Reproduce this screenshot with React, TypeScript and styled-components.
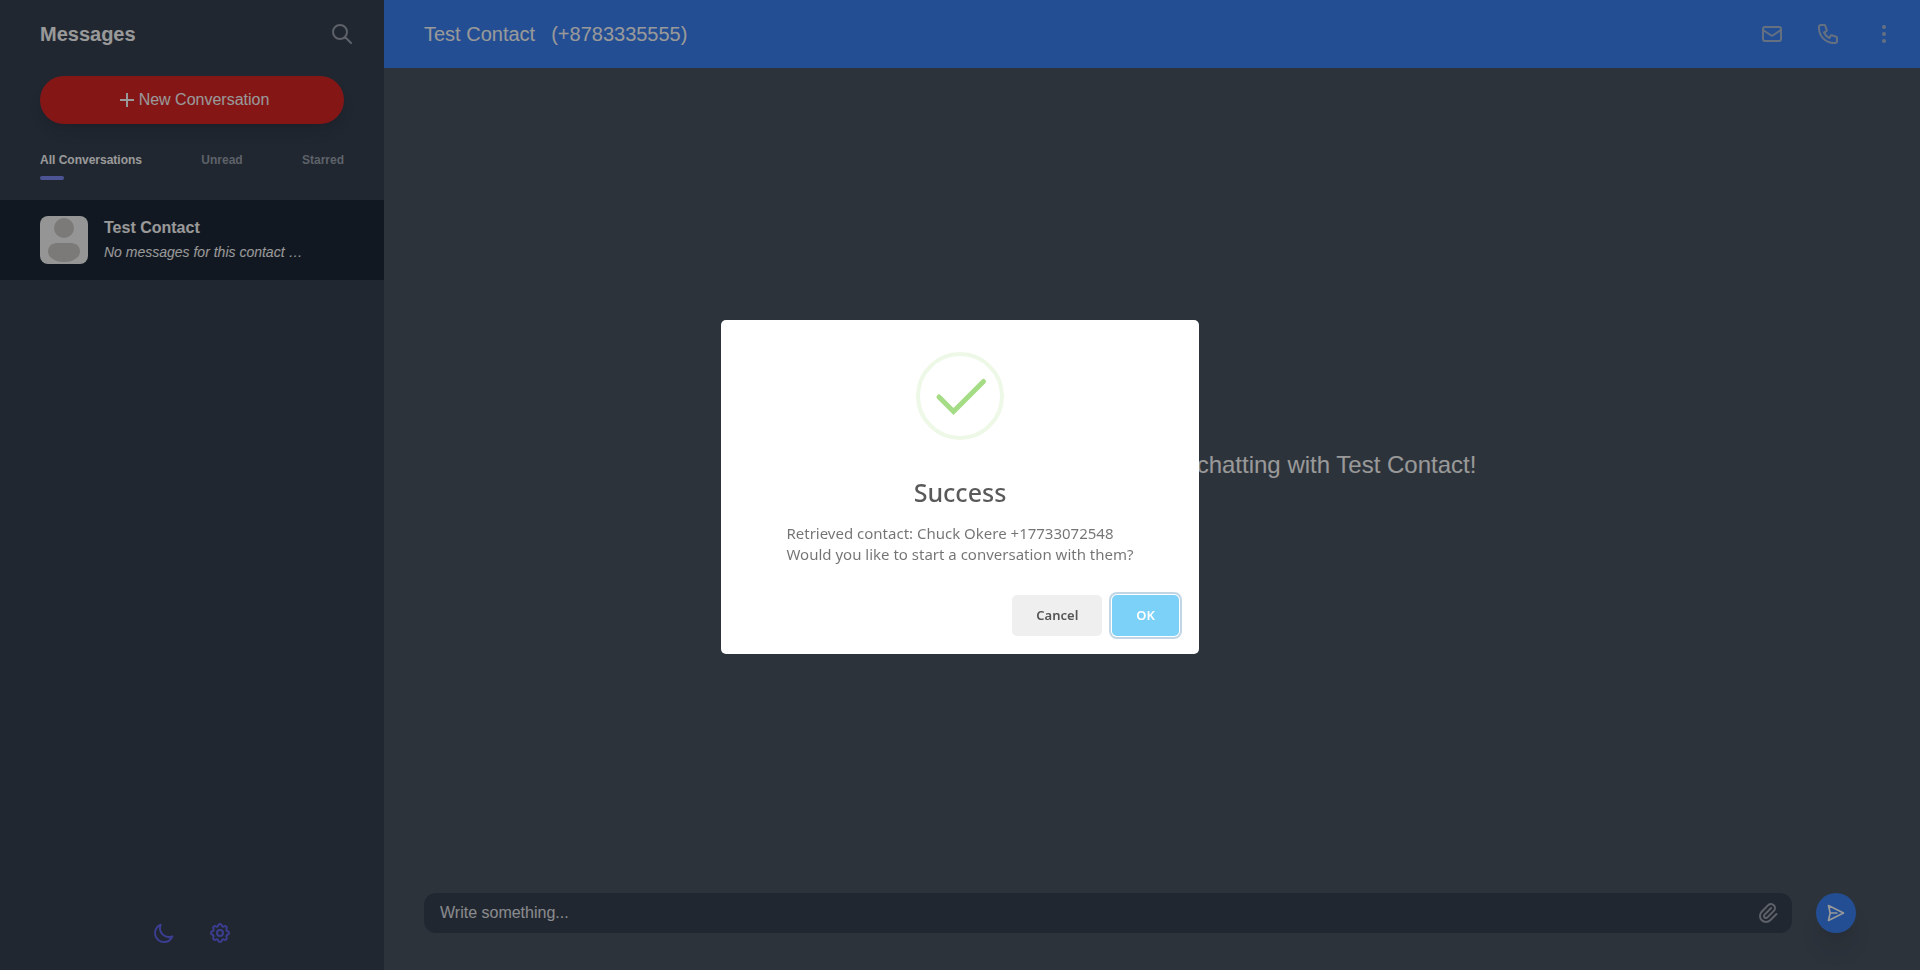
import React from "react";
import styled, { createGlobalStyle } from "styled-components";
import {
  HiOutlineSearch,
  HiOutlineMail,
  HiOutlinePhone,
  HiOutlineDotsVertical,
  HiOutlineMoon,
  HiOutlineCog,
  HiOutlinePaperClip,
} from "react-icons/hi";

const GlobalStyle = createGlobalStyle`
  *, *::before, *::after { box-sizing: border-box; }
  body {
    margin: 0;
    font-family: "Liberation Sans", Arial, sans-serif;
    font-size: 16px;
    line-height: 24px;
    color: #fff;
  }
  h1, h2, p, ul { margin: 0; padding: 0; font-weight: inherit; font-size: inherit; }
  ul { list-style: none; }
  button, input { font: inherit; color: inherit; border: 0; padding: 0; background: none; }
  button { cursor: pointer; }
  svg { display: block; }
`;

const Page = styled.div`
  display: flex;
  height: 100vh;
  overflow: hidden;
`;

const Sidebar = styled.aside`
  display: flex;
  flex-direction: column;
  width: 20%;
  flex-shrink: 0;
  background: #374151;
`;

const SidebarTop = styled.div`
  display: flex;
  flex-direction: column;
  padding: 0 40px 20px;
`;

const SidebarHeader = styled.div`
  display: flex;
  align-items: center;
  justify-content: space-between;
  height: 68px;
  margin-right: -10px;
`;

const SidebarTitle = styled.h1`
  font-size: 20px;
  font-weight: 700;
`;

const IconButton = styled.button<{ $color?: string }>`
  width: 24px;
  height: 24px;
  color: ${(p) => p.$color ?? "#9ca3af"};
`;

const NewButton = styled.button`
  display: flex;
  align-items: center;
  justify-content: center;
  gap: 4px;
  height: 48px;
  margin-top: 8px;
  padding-left: 4px;
  border-radius: 24px;
  background: #dc2626;
  box-shadow: 0 10px 15px -3px rgba(0, 0, 0, 0.1), 0 4px 6px -2px rgba(0, 0, 0, 0.05);
`;

const Tabs = styled.nav`
  display: flex;
  justify-content: space-between;
  margin-top: 24px;
`;

const Tab = styled.button<{ $active?: boolean }>`
  display: flex;
  flex-direction: column;
  gap: 4px;
  font-size: 12px;
  font-weight: 700;
  color: ${(p) => (p.$active ? "#fff" : "#9ca3af")};

  &::after {
    content: "";
    width: 24px;
    height: 4px;
    border-radius: 2px;
    background: ${(p) => (p.$active ? "#818cf8" : "transparent")};
  }
`;

const Conversations = styled.ul`
  flex: 1;
`;

const Conversation = styled.li`
  display: flex;
  align-items: center;
  gap: 16px;
  height: 80px;
  padding: 0 40px;
  background: #1f2937;
`;

const AvatarFrame = styled.svg`
  width: 48px;
  height: 48px;
  border-radius: 8px;
  background: #f8f8f8;
`;

const ContactName = styled.p`
  font-weight: 700;
`;

const ContactPreview = styled.p`
  font-size: 14px;
  font-style: italic;
`;

const SidebarFooter = styled.div`
  display: flex;
  justify-content: center;
  gap: 32px;
  padding-bottom: 25px;
`;

const Main = styled.main`
  display: flex;
  flex-direction: column;
  flex: 1;
  min-width: 0;
  background: #4b5563;
`;

const ChatHeader = styled.header`
  display: flex;
  align-items: center;
  justify-content: space-between;
  height: 68px;
  padding: 0 24px 0 40px;
  background: #3b82f6;
`;

const ChatTitle = styled.h2`
  display: flex;
  gap: 16px;
  font-size: 20px;
`;

const ChatActions = styled.div`
  display: flex;
  gap: 32px;
`;

const ChatBody = styled.section`
  display: flex;
  align-items: center;
  justify-content: center;
  flex: 1;
  font-size: 24px;
`;

const Composer = styled.form`
  display: flex;
  align-items: center;
  gap: 24px;
  padding: 32px 64px 37px 40px;
`;

const Field = styled.label`
  display: flex;
  align-items: center;
  flex: 1;
  height: 40px;
  padding: 0 12px 0 16px;
  border-radius: 12px;
  background: #374151;
`;

const FieldInput = styled.input`
  flex: 1;
  min-width: 0;
  outline: 0;

  &::placeholder {
    color: #e5e7eb;
    opacity: 1;
  }
`;

const SendButton = styled.button`
  display: flex;
  align-items: center;
  justify-content: center;
  width: 40px;
  height: 40px;
  border-radius: 50%;
  background: #3b82f6;
  box-shadow: 0 20px 25px -5px rgba(0, 0, 0, 0.1), 0 10px 10px -5px rgba(0, 0, 0, 0.04);
`;

const Overlay = styled.div`
  position: fixed;
  inset: 0;
  display: flex;
  align-items: center;
  justify-content: center;
  padding-top: 3px;
  background: rgba(0, 0, 0, 0.4);
`;

const Modal = styled.div`
  display: flex;
  flex-direction: column;
  align-items: center;
  width: 478px;
  padding-top: 32px;
  border-radius: 5px;
  background: #fff;
  font-family: "Noto Sans", "Open Sans", sans-serif;
`;

const ModalTitle = styled.h2`
  margin-top: 34px;
  font-size: 25px;
  font-weight: 500;
  line-height: 36px;
  color: rgba(0, 0, 0, 0.65);
`;

const ModalText = styled.p`
  margin-top: 13px;
  font-size: 15px;
  line-height: 21px;
  color: rgba(0, 0, 0, 0.55);
`;

const ModalFooter = styled.div`
  display: flex;
  justify-content: flex-end;
  align-self: stretch;
  gap: 10px;
  padding: 30px 20px 18px;
`;

const ModalButton = styled.button<{ $primary?: boolean }>`
  height: 41px;
  padding: 0 24px;
  border-radius: 5px;
  font-size: 13px;
  font-weight: 600;
  color: ${(p) => (p.$primary ? "#fff" : "#555")};
  background: ${(p) => (p.$primary ? "#7cd1f9" : "#efefef")};
  box-shadow: ${(p) => (p.$primary ? "0 0 0 1px #fff, 0 0 0 3px rgba(43, 114, 165, 0.29)" : "none")};
`;

const Avatar = () => (
  <AvatarFrame viewBox="0 0 48 48" aria-hidden="true">
    <circle cx="24" cy="12" r="10" fill="#cecbc8" />
    <path
      d="M17 27h14c5.500 0 9 4 9 8.500C40 41.500 33 46 24 46S8 41.500 8 35.500C8 31 11.500 27 17 27z"
      fill="#cecbc8"
    />
  </AvatarFrame>
);

const PlusIcon = () => (
  <svg width="16" height="16" viewBox="0 0 16 16" fill="none" stroke="currentColor" strokeWidth="2" aria-hidden="true">
    <path d="M8 1v14M1 8h14" />
  </svg>
);

const SendIcon = () => (
  <svg
    width="20"
    height="20"
    viewBox="0 0 24 24"
    fill="none"
    stroke="currentColor"
    strokeWidth="2"
    strokeLinecap="round"
    strokeLinejoin="round"
    aria-hidden="true"
  >
    <path d="M5 12L3 21l18-9L3 3l2 9zm0 0h8" />
  </svg>
);

const SuccessIcon = () => (
  <svg width="88" height="88" viewBox="0 0 88 88" fill="none" aria-hidden="true">
    <circle cx="44" cy="44" r="42" stroke="#edf8e7" strokeWidth="4" />
    <path d="M23 45L37.500 59.500L67.500 29.500" stroke="#a5dc86" strokeWidth="5" strokeLinecap="round" />
  </svg>
);

export default function App() {
  return (
    <>
      <GlobalStyle />
      <Page>
        <Sidebar>
          <SidebarTop>
            <SidebarHeader>
              <SidebarTitle>Messages</SidebarTitle>
              <IconButton aria-label="Search">
                <HiOutlineSearch size={24} />
              </IconButton>
            </SidebarHeader>
            <NewButton>
              <PlusIcon />
              New Conversation
            </NewButton>
            <Tabs>
              <Tab $active>All Conversations</Tab>
              <Tab>Unread</Tab>
              <Tab>Starred</Tab>
            </Tabs>
          </SidebarTop>
          <Conversations>
            <Conversation>
              <Avatar />
              <div>
                <ContactName>Test Contact</ContactName>
                <ContactPreview>No messages for this contact …</ContactPreview>
              </div>
            </Conversation>
          </Conversations>
          <SidebarFooter>
            <IconButton $color="#6366f1" aria-label="Dark mode">
              <HiOutlineMoon size={24} />
            </IconButton>
            <IconButton $color="#6366f1" aria-label="Settings">
              <HiOutlineCog size={24} />
            </IconButton>
          </SidebarFooter>
        </Sidebar>
        <Main>
          <ChatHeader>
            <ChatTitle>
              <span>Test Contact</span>
              <span>(+8783335555)</span>
            </ChatTitle>
            <ChatActions>
              <IconButton $color="#a8bcd8" aria-label="Mail">
                <HiOutlineMail size={24} />
              </IconButton>
              <IconButton $color="#a8bcd8" aria-label="Call">
                <HiOutlinePhone size={24} />
              </IconButton>
              <IconButton $color="#a8bcd8" aria-label="More">
                <HiOutlineDotsVertical size={24} />
              </IconButton>
            </ChatActions>
          </ChatHeader>
          <ChatBody>
            <p>Write your message below to start chatting with Test Contact!</p>
          </ChatBody>
          <Composer>
            <Field>
              <FieldInput type="text" placeholder="Write something..." aria-label="Message" />
              <IconButton type="button" aria-label="Attach file">
                <HiOutlinePaperClip size={24} />
              </IconButton>
            </Field>
            <SendButton type="button" aria-label="Send">
              <SendIcon />
            </SendButton>
          </Composer>
        </Main>
      </Page>
      <Overlay>
        <Modal role="dialog" aria-modal="true" aria-labelledby="dialog-title">
          <SuccessIcon />
          <ModalTitle id="dialog-title">Success</ModalTitle>
          <ModalText>
            Retrieved contact: Chuck Okere +17733072548
            <br />
            Would you like to start a conversation with them?
          </ModalText>
          <ModalFooter>
            <ModalButton>Cancel</ModalButton>
            <ModalButton $primary>OK</ModalButton>
          </ModalFooter>
        </Modal>
      </Overlay>
    </>
  );
}
